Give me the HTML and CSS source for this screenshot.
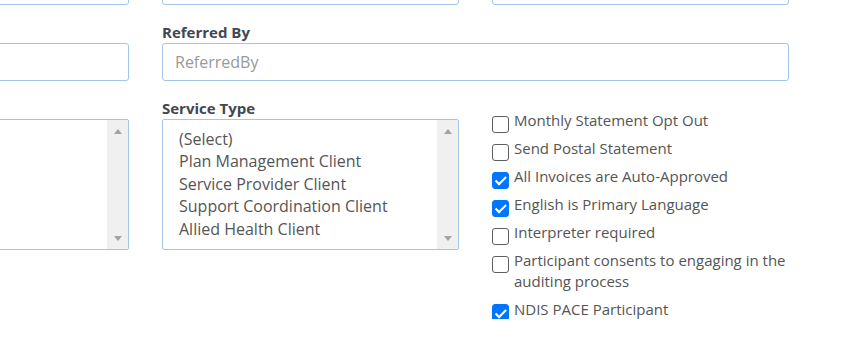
FILE: index.html
```html
<!DOCTYPE html>
<html lang="en">
<head>
    <meta charset="UTF-8">
    <meta name="viewport" content="width=device-width, initial-scale=1.0">
    <title>Client Details</title>
    <link rel="stylesheet" href="styles.css">
</head>
<body>
    <div class="form">
        <div class="field">
            <label class="field-label"></label>
            <input class="input" type="text">
        </div>
        <div class="field">
            <label class="field-label"></label>
            <input class="input" type="text">
        </div>
        <div class="field">
            <label class="field-label"></label>
            <input class="input" type="text">
        </div>

        <div class="field">
            <label class="field-label"></label>
            <input class="input" type="text">
        </div>
        <div class="field span-2">
            <label class="field-label">Referred By</label>
            <input class="input" type="text" placeholder="ReferredBy">
        </div>

        <div class="field">
            <label class="field-label"></label>
            <div class="listbox">
                <ul class="listbox-options"></ul>
                <div class="listbox-scroll">
                    <span class="scroll-btn"><span class="arrow arrow-up"></span></span>
                    <span class="scroll-btn"><span class="arrow arrow-down"></span></span>
                </div>
            </div>
        </div>
        <div class="field">
            <label class="field-label">Service Type</label>
            <div class="listbox">
                <ul class="listbox-options">
                    <li>(Select)</li>
                    <li>Plan Management Client</li>
                    <li>Service Provider Client</li>
                    <li>Support Coordination Client</li>
                    <li>Allied Health Client</li>
                </ul>
                <div class="listbox-scroll">
                    <span class="scroll-btn"><span class="arrow arrow-up"></span></span>
                    <span class="scroll-btn"><span class="arrow arrow-down"></span></span>
                </div>
            </div>
        </div>
        <ul class="checklist">
            <li class="check"><input type="checkbox"><span>Monthly Statement Opt Out</span></li>
            <li class="check"><input type="checkbox"><span>Send Postal Statement</span></li>
            <li class="check"><input type="checkbox" checked><span>All Invoices are Auto-Approved</span></li>
            <li class="check"><input type="checkbox" checked><span>English is Primary Language</span></li>
            <li class="check"><input type="checkbox"><span>Interpreter required</span></li>
            <li class="check"><input type="checkbox"><span>Participant consents to engaging in the auditing process</span></li>
            <li class="check"><input type="checkbox" checked><span>NDIS PACE Participant</span></li>
        </ul>
    </div>
</body>
</html>
```

FILE: styles.css
```css
body {
    margin: 0;
    font-family: 'Open Sans', sans-serif;
    background: #fff;
    color: #555;
    overflow: hidden;
}

.form {
    display: grid;
    grid-template-columns: repeat(3, 297px);
    column-gap: 33px;
    row-gap: 17px;
    margin: -54px 0 0 -168px;
}

.field {
    display: flex;
    flex-direction: column;
}

.span-2 {
    grid-column: span 2;
}

.field-label {
    min-height: 21px;
    font-size: 15px;
    line-height: 21px;
    font-weight: 700;
    color: #3f4754;
}

.input {
    box-sizing: border-box;
    height: 38px;
    padding: 0 12px;
    border: 1px solid #a3c6e6;
    border-radius: 3px;
    font-family: inherit;
    font-size: 16px;
    color: #555;
    outline: none;
}

.input::placeholder {
    color: #999;
}

.listbox {
    box-sizing: border-box;
    display: flex;
    height: 131px;
    border: 1px solid #a3c6e6;
    border-radius: 2px;
    overflow: hidden;
}

.listbox-options {
    flex: 1;
    margin: 0;
    padding: 7.5px 16px;
    list-style: none;
    font-size: 16px;
    line-height: 22.5px;
    color: #555;
    white-space: nowrap;
    overflow: hidden;
}

.listbox-scroll {
    width: 21px;
    display: flex;
    flex-direction: column;
    justify-content: space-between;
    background: #f0f0f0;
}

.scroll-btn {
    height: 22px;
    display: flex;
    align-items: center;
    justify-content: center;
}

.arrow {
    width: 0;
    height: 0;
    border-left: 4.5px solid transparent;
    border-right: 4.5px solid transparent;
}

.arrow-up {
    border-bottom: 5px solid #a3a3a3;
}

.arrow-down {
    border-top: 5px solid #a3a3a3;
}

.checklist {
    margin: 12px 0 0;
    padding: 0;
    list-style: none;
    display: flex;
    flex-direction: column;
    gap: 7.5px;
}

.check {
    display: flex;
    align-items: flex-start;
    gap: 5px;
    font-size: 15px;
    line-height: 20.5px;
    color: #555;
}

.check input {
    appearance: none;
    position: relative;
    flex: none;
    box-sizing: border-box;
    width: 17px;
    height: 17px;
    margin: 5.5px 0 -2px;
    border: 1px solid #5f5f5f;
    border-radius: 3px;
    background: #fff;
}

.check input:checked {
    background: #0075ff;
    border-color: #0075ff;
}

.check input:checked::after {
    content: '';
    position: absolute;
    left: 5px;
    top: 1.5px;
    width: 4px;
    height: 8.5px;
    border: solid #fff;
    border-width: 0 2.5px 2.5px 0;
    transform: rotate(45deg);
}
```
